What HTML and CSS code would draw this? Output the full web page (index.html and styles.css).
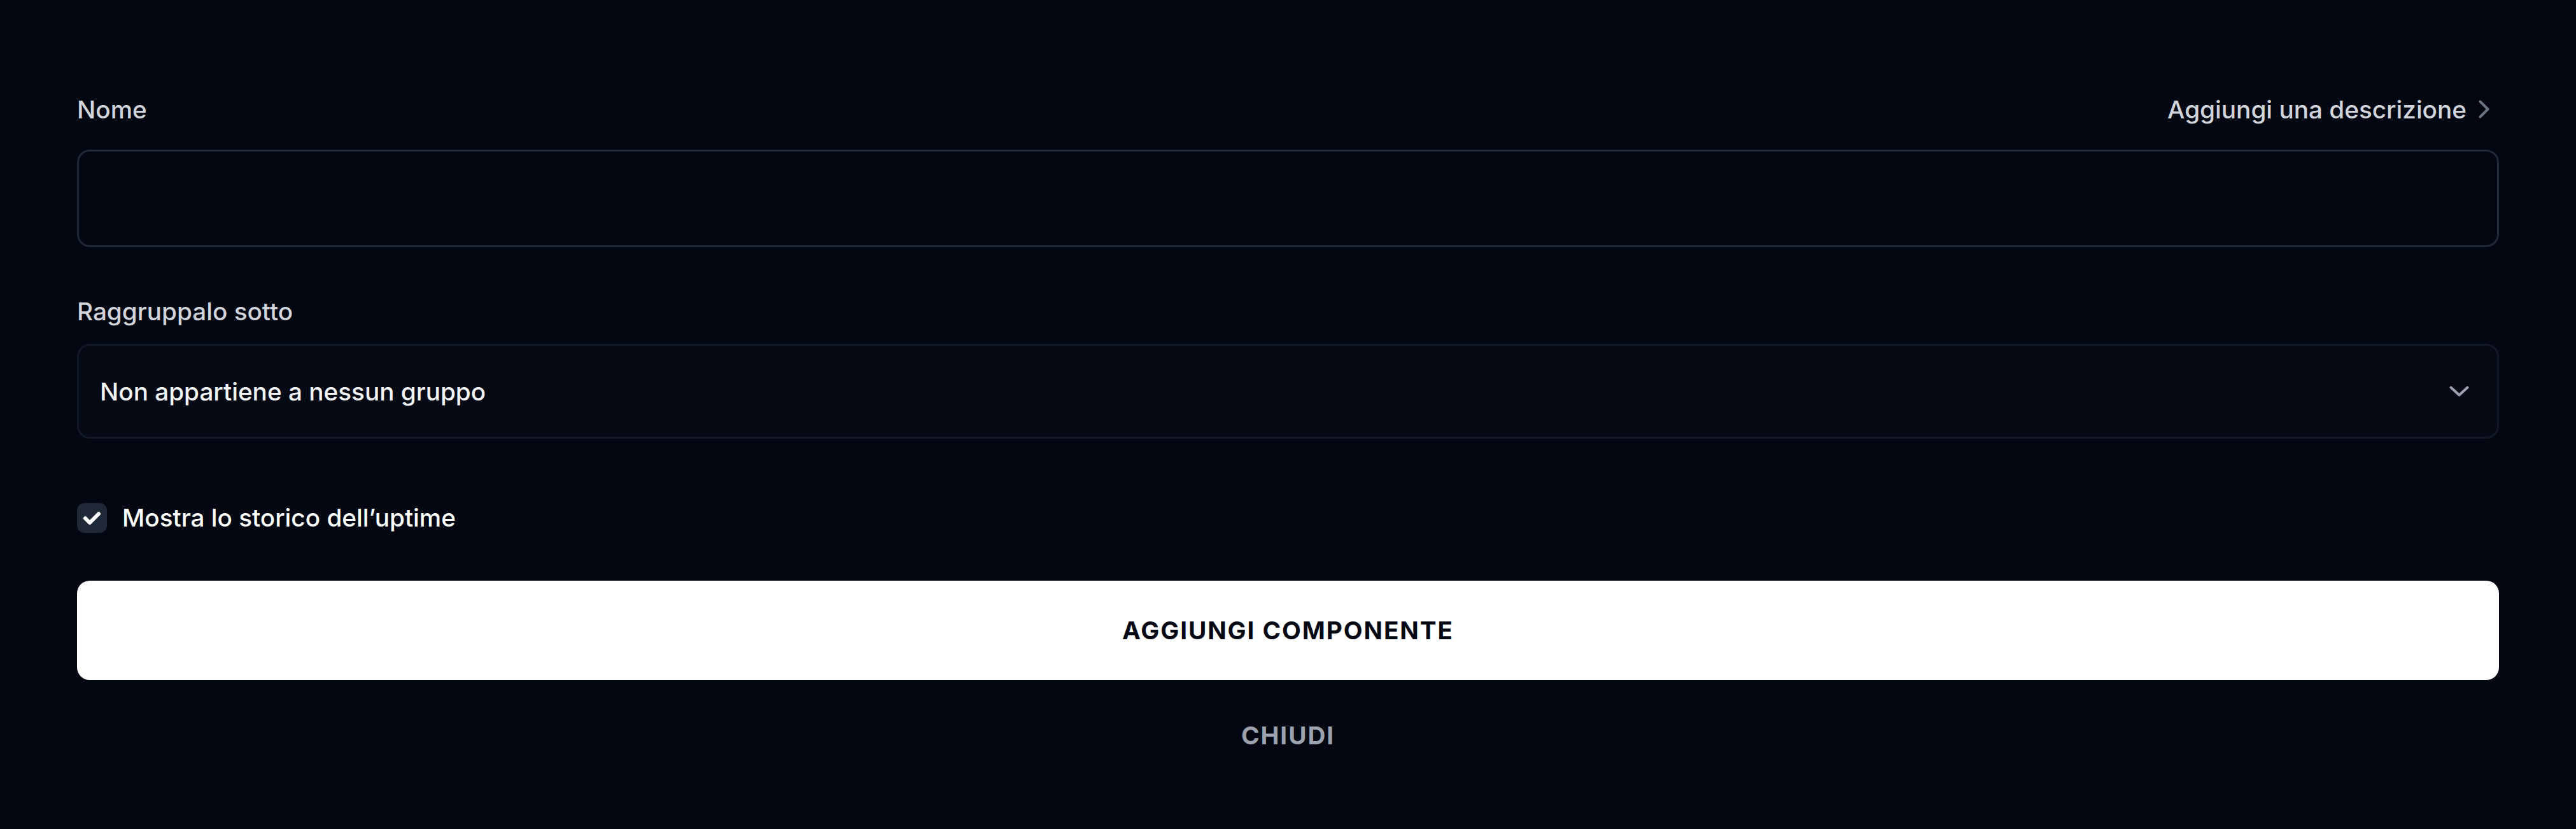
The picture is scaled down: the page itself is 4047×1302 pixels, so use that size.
FILE: index.html
```html
<!DOCTYPE html>
<html lang="it">
<head>
<meta charset="utf-8">
<title>Aggiungi componente</title>
<link rel="stylesheet" href="styles.css">
</head>
<body>
<form class="form">
  <div class="field-head">
    <label class="label" for="nome">Nome</label>
    <button type="button" class="desc-link">
      <span>Aggiungi una descrizione</span>
      <svg class="chev-right" width="17" height="29" viewBox="0 0 17 29" aria-hidden="true"><polyline points="2.5,2.5 14.5,14.5 2.5,26.5" fill="none" stroke="currentColor" stroke-width="4" stroke-linecap="round" stroke-linejoin="round"/></svg>
    </button>
  </div>
  <input id="nome" class="input" type="text">

  <label class="label label-group">Raggruppalo sotto</label>
  <div class="select">
    <span class="select-text">Non appartiene a nessun gruppo</span>
    <svg class="chev-down" width="31" height="17" viewBox="0 0 31 17" aria-hidden="true"><polyline points="2.5,2.5 15.5,14.5 28.5,2.5" fill="none" stroke="currentColor" stroke-width="4" stroke-linecap="round" stroke-linejoin="round"/></svg>
  </div>

  <label class="check-row">
    <span class="checkbox">
      <svg width="47" height="47" viewBox="0 0 47 47" aria-hidden="true"><polyline points="13,24 20,31 34,17" fill="none" stroke="#ffffff" stroke-width="6" stroke-linecap="round" stroke-linejoin="round"/></svg>
    </span>
    <span class="check-text">Mostra lo storico dell’uptime</span>
  </label>

  <button type="button" class="primary">AGGIUNGI COMPONENTE</button>
  <button type="button" class="secondary">CHIUDI</button>
</form>
</body>
</html>
```
FILE: styles.css
```css
* {
  box-sizing: border-box;
}

html, body {
  margin: 0;
  padding: 0;
  background: #030712;
}

body {
  font-family: Inter, "Noto Sans", "Liberation Sans", sans-serif;
  font-size: 38.7px;
  line-height: 50px;
  color: #f3f4f6;
}

.form {
  display: flex;
  flex-direction: column;
  padding: 147px 121px 0;
}

.field-head {
  display: flex;
  justify-content: space-between;
  align-items: center;
  height: 50px;
  margin-bottom: 38px;
}

.label {
  display: block;
  font-weight: 500;
  color: #d1d5db;
  line-height: 50px;
}

.desc-link {
  display: flex;
  align-items: center;
  background: none;
  border: 0;
  padding: 0 15px 0 0;
  margin: 0;
  font: inherit;
  font-weight: 500;
  line-height: 50px;
  color: #d1d5db;
  cursor: pointer;
}

.chev-right {
  margin-left: 19px;
  margin-top: -2px;
  color: #6b7280;
}

.input {
  display: block;
  width: 100%;
  height: 153px;
  border: 3px solid #1f2937;
  border-radius: 20px;
  background: #030712;
  font: inherit;
  color: #f3f4f6;
  padding: 0 33px;
  outline: none;
}

.label-group {
  margin-top: 76px;
  margin-bottom: 26px;
}

.select {
  display: flex;
  align-items: center;
  justify-content: space-between;
  height: 149px;
  border: 3px solid #121926;
  border-radius: 20px;
  background: #060a15;
  padding: 0 44px 0 33px;
}

.select-text {
  font-weight: 500;
  color: #f3f4f6;
}

.chev-down {
  color: #9ca3af;
}

.check-row {
  display: flex;
  align-items: center;
  height: 50px;
  margin-top: 99px;
  gap: 24px;
}

.checkbox {
  display: flex;
  width: 47px;
  height: 47px;
  border-radius: 12px;
  background: #1f2937;
}

.check-text {
  font-weight: 500;
  color: #ffffff;
}

.primary {
  margin-top: 74px;
  height: 156px;
  width: 100%;
  border: 0;
  border-radius: 20px;
  background: #ffffff;
  color: #030712;
  font: inherit;
  font-weight: 700;
  letter-spacing: 0.05em;
  cursor: pointer;
}

.secondary {
  margin: 62px auto 0;
  background: none;
  border: 0;
  padding: 0;
  font: inherit;
  font-weight: 700;
  line-height: 50px;
  letter-spacing: 0.05em;
  color: #9ca3af;
  cursor: pointer;
}
```
